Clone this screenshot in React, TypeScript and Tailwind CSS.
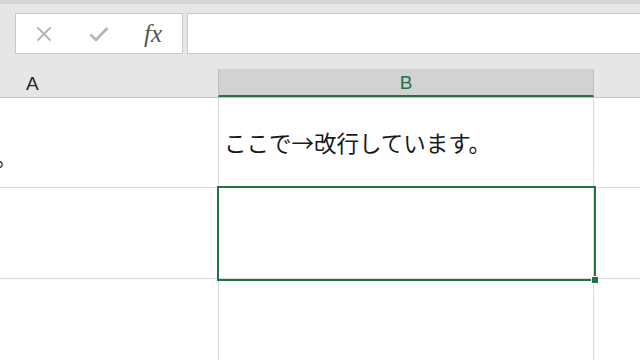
import React from "react";

export default function App() {
  const jp = { fontFamily: '"Noto Sans CJK JP", "Noto Sans", sans-serif' };
  return (
    <div className="w-[640px] h-[360px] overflow-hidden bg-white relative" style={{ fontFamily: '"Liberation Sans", Arial, sans-serif' }}>
      {/* top strip */}
      <div className="h-[4px] bg-[#d6d6d6]" />
      {/* formula bar */}
      <div className="h-[65px] bg-[#e6e6e6] flex items-start pt-[9px] pl-[15px] gap-[4px]">
        <div className="w-[168px] h-[41px] bg-white border border-[#c8c8c8] flex items-center">
          <svg width="16" height="16" viewBox="0 0 16 16" className="ml-[20px]">
            <path d="M1.5 1.5 L14.5 14.5 M14.5 1.5 L1.5 14.5" stroke="#b5b5b5" strokeWidth="2" fill="none" />
          </svg>
          <svg width="20" height="16" viewBox="0 0 20 16" className="ml-[37px]">
            <path d="M1.5 8.5 L7 14 L18.5 2" stroke="#b5b5b5" strokeWidth="2.6" fill="none" />
          </svg>
          <span className="ml-[35px] text-[25px] italic text-[#555555] leading-none" style={{ fontFamily: '"Liberation Serif", "Times New Roman", serif' }}>fx</span>
        </div>
        <div className="flex-1 h-[41px] bg-white border border-[#c8c8c8] border-r-0" />
      </div>
      {/* column headers */}
      <div className="flex h-[29px] bg-[#e6e6e6] border-b border-[#c4c4c4]">
        <div className="w-[218px] flex items-end pb-[1px] pl-[26px] text-[19px] leading-[24px] text-[#262626]">A</div>
        <div className="w-[376px] bg-[#d2d2d2] border-l border-[#c0c0c0] border-r border-b-2 border-b-[#217346] flex items-end justify-center pb-[0px] text-[19px] leading-[24px] text-[#217346]">B</div>
        <div className="flex-1" />
      </div>
      {/* rows */}
      <div className="flex flex-col">
        <div className="flex h-[90px] border-b border-[#dadada]">
          <div className="w-[219px] border-r border-[#dadada] overflow-hidden flex items-end pb-[20px]">
            <span className="text-[22px] text-[#1a1a1a] leading-none ml-[-5px]" style={jp}>。</span>
          </div>
          <div className="w-[375px] border-r border-[#dadada] flex items-center pl-[5px] pb-[1px]">
            <span className="text-[22.5px] text-[#1a1a1a] leading-none" style={jp}>ここで→改行しています。</span>
          </div>
          <div className="flex-1" />
        </div>
        <div className="flex h-[91px] border-b border-[#dadada]">
          <div className="w-[219px] border-r border-[#dadada]" />
          <div className="w-[375px] border-r border-[#dadada]" />
          <div className="flex-1" />
        </div>
        <div className="flex h-[90px]">
          <div className="w-[219px] border-r border-[#dadada]" />
          <div className="w-[375px] border-r border-[#dadada]" />
          <div className="flex-1" />
        </div>
      </div>
      {/* selection */}
      <div className="absolute left-[217px] top-[186px] w-[379px] h-[95px] border-2 border-[#217346]" />
      <div className="absolute left-[591px] top-[276px] w-[6px] h-[6px] bg-[#217346] border border-white" style={{ boxSizing: "content-box" }} />
    </div>
  );
}
